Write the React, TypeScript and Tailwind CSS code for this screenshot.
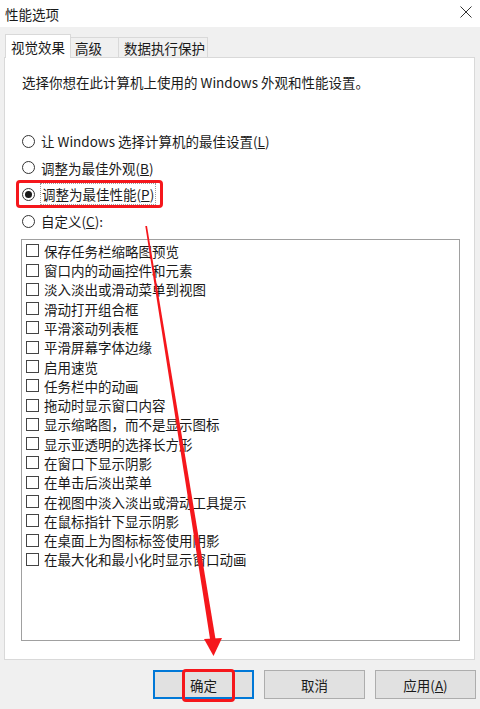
import React from 'react';

const EFFECTS = [
  '保存任务栏缩略图预览',
  '窗口内的动画控件和元素',
  '淡入淡出或滑动菜单到视图',
  '滑动打开组合框',
  '平滑滚动列表框',
  '平滑屏幕字体边缘',
  '启用速览',
  '任务栏中的动画',
  '拖动时显示窗口内容',
  '显示缩略图，而不是显示图标',
  '显示亚透明的选择长方形',
  '在窗口下显示阴影',
  '在单击后淡出菜单',
  '在视图中淡入淡出或滑动工具提示',
  '在鼠标指针下显示阴影',
  '在桌面上为图标标签使用阴影',
  '在最大化和最小化时显示窗口动画',
];

const Radio = ({ checked, children }: { checked?: boolean; children: React.ReactNode }) => (
  <div className="flex items-center h-[20px]">
    <span className="w-[13px] h-[13px] rounded-full border border-[#333] bg-white flex items-center justify-center">
      {checked && <span className="w-[7px] h-[7px] rounded-full bg-[#1a1a1a]" />}
    </span>
    <span className="ml-[6px]">{children}</span>
  </div>
);

const Btn = ({ primary, children }: { primary?: boolean; children: React.ReactNode }) => (
  <div
    className={`w-[101px] h-[29px] flex items-center justify-center bg-[#e1e1e1] border ${
      primary ? 'border-[#0078d7] border-2' : 'border-[#adadad]'
    }`}
  >
    {children}
  </div>
);

export default function App() {
  return (
    <div
      className="relative w-[480px] h-[709px] overflow-hidden bg-[#f0f0f0] text-[13.5px] text-[#1a1a1a] leading-[20px]"
      style={{ fontFamily: '"Noto Sans CJK SC", "Noto Sans", sans-serif' }}
    >
      {/* title bar */}
      <div className="h-[27px] bg-white flex items-center justify-between pl-[5px] pr-[8px]">
        <span>性能选项</span>
        <svg width="12" height="12" viewBox="0 0 12 12" className="mb-[4px]">
          <path d="M0.5 0.5 L11.5 11.5 M11.5 0.5 L0.5 11.5" stroke="#333" strokeWidth="1" />
        </svg>
      </div>

      {/* tabs */}
      <div className="h-[30px] flex items-end pl-[5px]">
        <div className="h-[24px] px-[5px] bg-white border border-b-0 border-[#d9d9d9] flex items-center relative top-[1px] z-10">
          视觉效果
        </div>
        <div className="h-[20px] w-[48px] pl-[4px] border-t border-r border-[#d9d9d9] flex items-center">高级</div>
        <div className="h-[20px] w-[89px] pl-[5px] border-t border-r border-[#d9d9d9] flex items-center">数据执行保护</div>
      </div>

      {/* panel */}
      <div className="ml-[4px] w-[471px] h-[603px] bg-white border border-[#d9d9d9] pt-[14px]">
        <div className="pl-[17px]">选择你想在此计算机上使用的 Windows 外观和性能设置。</div>

        <div className="mt-[39px] pl-[17px] flex flex-col gap-[6.7px]">
          <Radio>
            让 Windows 选择计算机的最佳设置(<span className="underline">L</span>)
          </Radio>
          <Radio>
            调整为最佳外观(<span className="underline">B</span>)
          </Radio>
          <Radio checked>
            <span className="border border-dotted border-[#9a9a9a] px-[1px] -ml-[1px]">
              调整为最佳性能(<span className="underline">P</span>)
            </span>
          </Radio>
          <Radio>
            自定义(<span className="underline">C</span>):
          </Radio>
        </div>

        <div className="mt-[8px] ml-[16px] w-[439px] h-[402px] border border-[#a0a0a0] pt-[1px] pl-[4px]">
          {EFFECTS.map((label) => (
            <div key={label} className="h-[19.3px] flex items-center">
              <span className="w-[13px] h-[13px] border border-[#444] bg-white" />
              <span className="ml-[5px]">{label}</span>
            </div>
          ))}
        </div>
      </div>

      {/* buttons */}
      <div className="mt-[10px] flex justify-end gap-[10px] pr-[4px]">
        <Btn primary>确定</Btn>
        <Btn>取消</Btn>
        <Btn>
          应用(<span className="underline">A</span>)
        </Btn>
      </div>

      {/* annotations */}
      <div className="absolute left-[16px] top-[180px] w-[147px] h-[28px] border-[3px] border-[#f5171c] rounded-[4px]" />
      <div className="absolute left-[182px] top-[669px] w-[53px] h-[33px] border-[3px] border-[#f5171c] rounded-[4px]" />
      <svg className="absolute left-0 top-0" width="480" height="709" viewBox="0 0 480 709">
        <polygon points="145.3,226 147,226 216,642 210.5,642" fill="#f5171c" />
        <polygon points="204,639 222,638 213.5,656" fill="#f5171c" />
      </svg>
    </div>
  );
}
